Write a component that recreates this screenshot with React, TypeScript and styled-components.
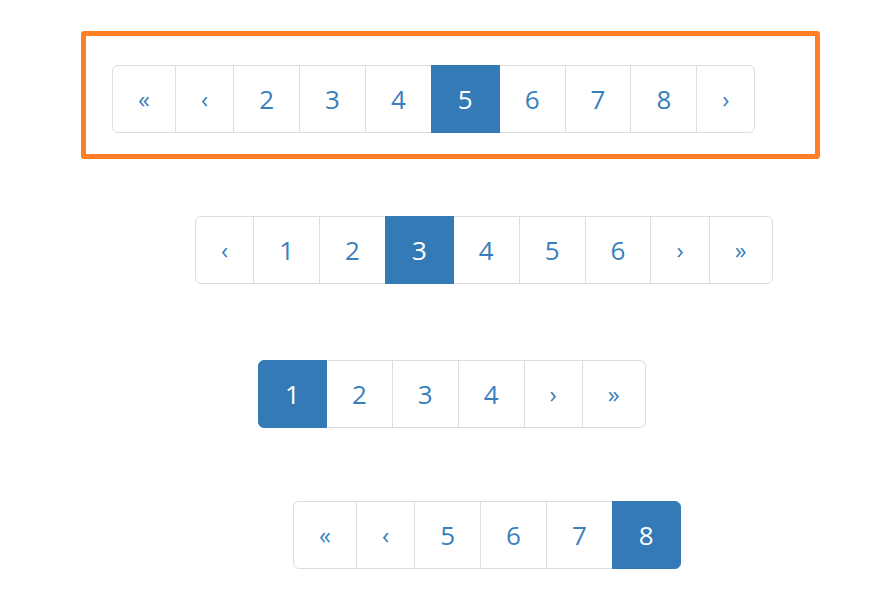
import { FC } from "react";
import styled, { createGlobalStyle } from "styled-components";

const GlobalStyle = createGlobalStyle`
    html, body {
        margin: 0;
        padding: 0;
        background: #ffffff;
    }
    body {
        font-family: "Open Sans", "Noto Sans", sans-serif;
    }
`

const Page = styled.div`
    display: flex;
    flex-direction: column;
    align-items: flex-start;
    width: 876px;
    height: 610px;
    padding-top: 31px;
    box-sizing: border-box;
`

const Highlight = styled.div`
    margin-left: 81px;
    width: 739px;
    box-sizing: border-box;
    border: 5px solid #ff7f27;
    border-radius: 3px;
    padding: 29px 0 21px 26px;
`

const Pagination = styled.ul<{ $left?: number; $top?: number }>`
    display: flex;
    list-style: none;
    margin: ${p => p.$top ?? 0}px 0 0 ${p => p.$left ?? 0}px;
    padding: 0;

    li:first-child > span {
        margin-left: 0;
        border-top-left-radius: 6px;
        border-bottom-left-radius: 6px;
    }
    li:last-child > span {
        border-top-right-radius: 6px;
        border-bottom-right-radius: 6px;
    }
`

const PageLink = styled.span<{ $active?: boolean }>`
    position: relative;
    display: block;
    margin-left: -1px;
    padding: 0 ${p => p.$active ? 26 : 25}px;
    height: 66px;
    line-height: 66px;
    font-size: 26px;
    color: ${p => p.$active ? "#ffffff" : "#3a7fbd"};
    background: ${p => p.$active ? "#337ab7" : "#ffffff"};
    border: 1px solid ${p => p.$active ? "#337ab7" : "#dddddd"};
    z-index: ${p => p.$active ? 2 : 0};
    cursor: pointer;
`

const Arrow = styled(PageLink)`
    padding: 0 25px;
    font-size: 24px;
`

interface PagerProps {
    items: string[]
    active: string
    left?: number
    top?: number
}

const arrows = ["«", "‹", "›", "»"]

const Pager: FC<PagerProps> = ({ items, active, left, top }) => {
    return (
        <Pagination $left={left} $top={top}>
            {items.map(item => (
                <li key={item}>
                    {arrows.includes(item)
                        ? <Arrow>{item}</Arrow>
                        : <PageLink $active={item === active}>{item}</PageLink>}
                </li>
            ))}
        </Pagination>
    );
}

const App: FC = () => {
    return (
        <>
            <GlobalStyle />
            <Page>
                <Highlight>
                    <Pager items={["«", "‹", "2", "3", "4", "5", "6", "7", "8", "›"]} active="5" />
                </Highlight>
                <Pager items={["‹", "1", "2", "3", "4", "5", "6", "›", "»"]} active="3" left={195} top={57} />
                <Pager items={["1", "2", "3", "4", "›", "»"]} active="1" left={258} top={76} />
                <Pager items={["«", "‹", "5", "6", "7", "8"]} active="8" left={293} top={73} />
            </Page>
        </>
    );
}

export default App;
